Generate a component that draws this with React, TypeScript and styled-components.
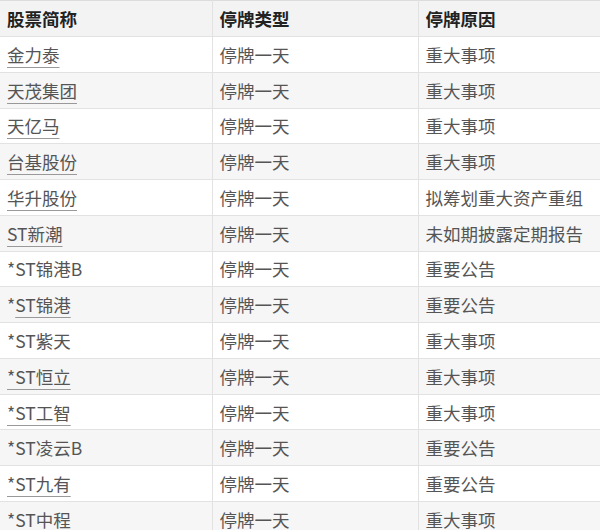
import React from "react";
import styled, { createGlobalStyle } from "styled-components";

type Row = { name: string; prefix?: string; linked: boolean; type: string; reason: string };

const rows: Row[] = [
  { name: "金力泰", linked: true, type: "停牌一天", reason: "重大事项" },
  { name: "天茂集团", linked: true, type: "停牌一天", reason: "重大事项" },
  { name: "天亿马", linked: true, type: "停牌一天", reason: "重大事项" },
  { name: "台基股份", linked: true, type: "停牌一天", reason: "重大事项" },
  { name: "华升股份", linked: true, type: "停牌一天", reason: "拟筹划重大资产重组" },
  { name: "ST新潮", linked: true, type: "停牌一天", reason: "未如期披露定期报告" },
  { name: "*ST锦港B", linked: false, type: "停牌一天", reason: "重要公告" },
  { name: "ST锦港", prefix: "*", linked: true, type: "停牌一天", reason: "重要公告" },
  { name: "*ST紫天", linked: false, type: "停牌一天", reason: "重大事项" },
  { name: "*ST恒立", linked: true, type: "停牌一天", reason: "重大事项" },
  { name: "*ST工智", linked: true, type: "停牌一天", reason: "重大事项" },
  { name: "*ST凌云B", linked: false, type: "停牌一天", reason: "重要公告" },
  { name: "*ST九有", linked: true, type: "停牌一天", reason: "重要公告" },
  { name: "*ST中程", linked: true, type: "停牌一天", reason: "重大事项" },
];

const App = () => {
  return (
    <>
      <GlobalStyle />
      <Table>
        <colgroup>
          <col style={{ width: "212px" }} />
          <col style={{ width: "206px" }} />
          <col />
        </colgroup>
        <thead>
          <tr>
            <Th>股票简称</Th>
            <Th>停牌类型</Th>
            <Th>停牌原因</Th>
          </tr>
        </thead>
        <tbody>
          {rows.map((r, i) => (
            <Tr key={i} $striped={i % 2 === 1}>
              <Td>
                {r.prefix}
                {r.linked ? <StockLink>{r.name}</StockLink> : r.name}
              </Td>
              <Td>{r.type}</Td>
              <Td>{r.reason}</Td>
            </Tr>
          ))}
        </tbody>
      </Table>
    </>
  );
};

export default App;

const GlobalStyle = createGlobalStyle`
  body {
    margin: 0;
    background: #fff;
    font-family: "Noto Sans CJK SC", "Noto Sans", sans-serif;
  }
`;

const Table = styled.table`
  width: 600px;
  border-collapse: collapse;
  table-layout: fixed;
  border-top: 1px solid #dcdcdc;
  font-size: 17.5px;
  line-height: 1.2;
`;

const Th = styled.th`
  height: 35px;
  padding: 0 7px;
  text-align: left;
  font-weight: 700;
  color: #222;
  background: #f3f3f3;
  border-bottom: 1px solid #e2e2e2;
  border-left: 1px solid #e2e2e2;
  &:first-child {
    border-left: none;
  }
`;

const Tr = styled.tr<{ $striped: boolean }>`
  background: ${(p) => (p.$striped ? "#f6f6f6" : "#fff")};
`;

const Td = styled.td`
  height: 34.77px;
  padding: 0 7px;
  color: #555;
  white-space: nowrap;
  border-bottom: 1px solid #e2e2e2;
  border-left: 1px solid #e2e2e2;
  &:first-child {
    border-left: none;
  }
`;

const StockLink = styled.span`
  color: #555;
  text-decoration: underline;
  text-decoration-color: #999;
  text-underline-offset: 5px;
  text-decoration-thickness: 1px;
`;
